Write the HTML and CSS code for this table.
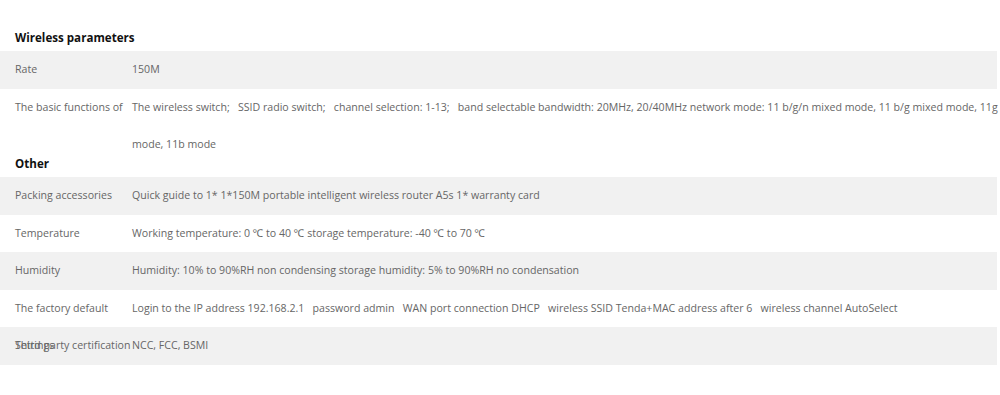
FILE: index.html
```html
<!DOCTYPE html>
<html lang="en">
<head>
  <meta charset="UTF-8" />
  <title>Specifications</title>
  <link rel="stylesheet" href="styles.css">
</head>
<body>
  <div id="specs">
    <!-- Wireless parameters -->
    <div class="section">
      <h3>Wireless parameters</h3>
      <div class="row">
        <div class="label">Rate</div>
        <div class="value">150M</div>
      </div>
      <div class="row">
        <div class="label">The basic functions of</div>
        <div class="value">The wireless switch;&nbsp;&nbsp; SSID radio switch;&nbsp;&nbsp; channel selection: 1-13;&nbsp;&nbsp; band selectable bandwidth: 20MHz, 20/40MHz network mode: 11 b/g/n mixed mode, 11 b/g mixed mode, 11g mode, 11b mode</div>
      </div>
    </div>
    <!-- Other -->
    <div class="section">
      <h3>Other</h3>
      <div class="row">
        <div class="label">Packing accessories</div>
        <div class="value">Quick guide to 1* 1*150M portable intelligent wireless router A5s 1* warranty card</div>
      </div>
      <div class="row">
        <div class="label">Temperature</div>
        <div class="value">Working temperature: 0 ℃ to 40 ℃ storage temperature: -40 ℃ to 70 ℃</div>
      </div>
      <div class="row">
        <div class="label">Humidity</div>
        <div class="value">Humidity: 10% to 90%RH non condensing storage humidity: 5% to 90%RH no condensation</div>
      </div>
      <div class="row">
        <div class="label">The factory default</div>
        <div class="value">Login to the IP address 192.168.2.1&nbsp;&nbsp; password admin&nbsp;&nbsp; WAN port connection DHCP&nbsp;&nbsp; wireless SSID Tenda+MAC address after 6&nbsp;&nbsp; wireless channel AutoSelect</div>
      </div>
      <div class="row">
        <div class="label">Third party certification<span class="ghost">Settings</span></div>
        <div class="value">NCC, FCC, BSMI</div>
      </div>
    </div>
  </div>
</body>
</html>
```

FILE: styles.css
```css
* {
  margin: 0;
  padding: 0;
  box-sizing: border-box;
}
body {
  font-family: "Open Sans", "Noto Sans", sans-serif;
  font-size: 10.6px;
  color: #666;
  background: #fff;
}
#specs {
  width: 997px;
}
.section h3 {
  height: 51px;
  padding: 25px 0 0 15px;
  line-height: 26px;
  font-size: 11.6px;
  font-weight: bold;
  color: #111;
}
.row {
  display: flex;
  height: 37.5px;
  line-height: 37.5px;
}
.section .row:nth-of-type(odd) {
  background: #f1f1f1;
}
.label {
  position: relative;
  width: 132px;
  flex: none;
  padding-left: 15px;
  white-space: nowrap;
}
/* el texto largo puede rozar el borde, como en la tabla original */
.value {
  flex: 1;
  margin-right: -3px;
}
/* texto superpuesto sobre la etiqueta */
.ghost {
  position: absolute;
  left: 15px;
  top: 0;
}
```
